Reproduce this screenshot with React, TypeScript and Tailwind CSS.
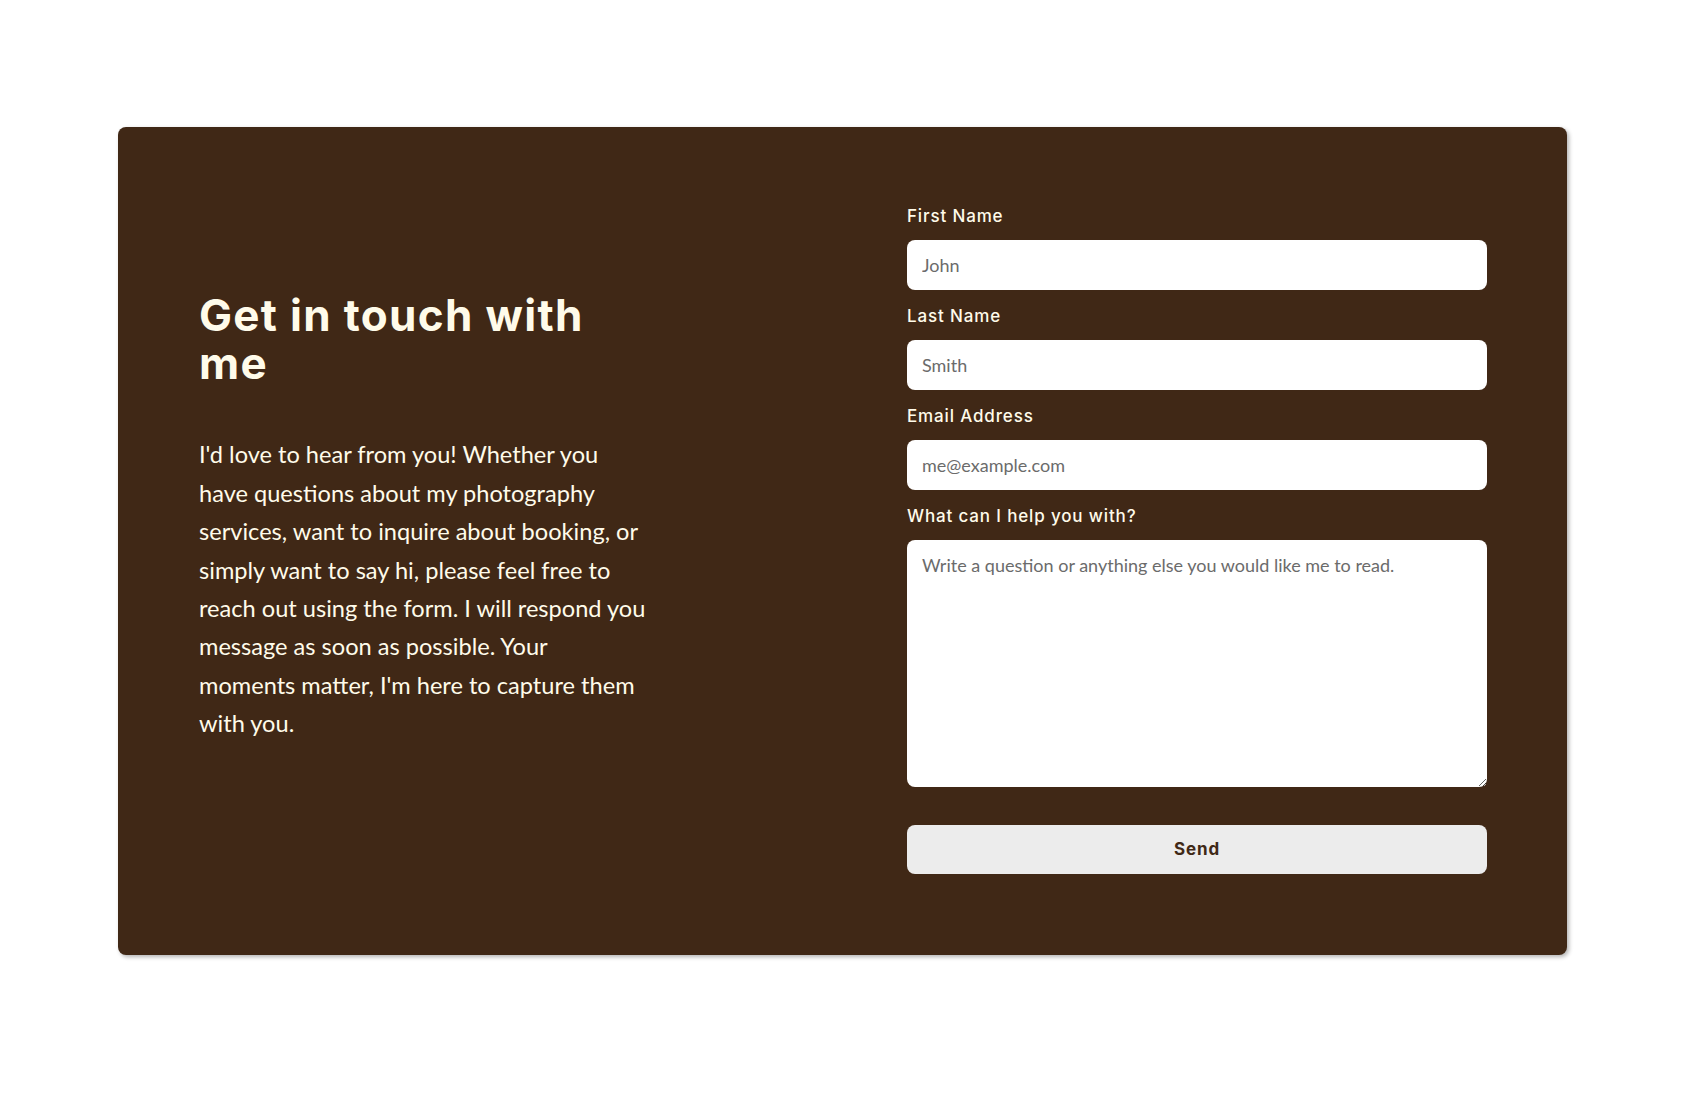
import React from 'react';

function Field({ label, placeholder, first }: { label: string; placeholder: string; first?: boolean }) {
  return (
    <div className={first ? '' : 'mt-[14px]'}>
      <label className="block mb-3 font-['Inter','Noto_Sans',sans-serif] text-[17px] leading-6 font-medium tracking-[0.05em] text-[#fffbea]">
        {label}
      </label>
      <input
        type="text"
        placeholder={placeholder}
        className="w-full h-[50px] rounded-lg bg-white px-[15px] font-['Lato','Open_Sans',sans-serif] text-[18px] text-gray-800 placeholder:text-[#6b6b6b] outline-none"
      />
    </div>
  );
}

export default function App() {
  return (
    <div className="min-h-screen bg-white pt-[127px] pl-[118px]">
      <div className="w-[1449px] h-[828px] bg-[#402816] rounded-lg shadow-[2px_2px_4px_rgba(0,0,0,0.3)] px-[81px] flex items-center justify-between">
        {/* Intro */}
        <div className="w-[447px] -mt-[48px]">
          <h1 className="font-['Inter','Noto_Sans',sans-serif] text-[44px] leading-[48px] font-bold tracking-[0.03em] text-[#fffbea]">
            Get in touch with me
          </h1>
          <p className="mt-[48px] font-['Lato','Open_Sans',sans-serif] text-[23.6px] leading-[38.4px] text-[#fffbea]">
            I'd love to hear from you! Whether you have questions about my photography services, want to inquire about
            booking, or simply want to say hi, please feel free to reach out using the form. I will respond you message as
            soon as possible. Your moments matter, I'm here to capture them with you.
          </p>
        </div>

        {/* Form */}
        <form className="w-[580px] -mr-px -mt-[4px]" onSubmit={(e) => e.preventDefault()}>
          <Field label="First Name" placeholder="John" first />
          <Field label="Last Name" placeholder="Smith" />
          <Field label="Email Address" placeholder="me@example.com" />
          <div className="mt-[14px]">
            <label className="block mb-3 font-['Inter','Noto_Sans',sans-serif] text-[17px] leading-6 font-medium tracking-[0.05em] text-[#fffbea]">
              What can I help you with?
            </label>
            <textarea
              placeholder="Write a question or anything else you would like me to read."
              className="block w-full h-[247px] rounded-lg bg-white px-[15px] py-[12px] font-['Lato','Open_Sans',sans-serif] text-[18px] text-gray-800 placeholder:text-[#6b6b6b] outline-none"
            />
          </div>
          <button
            type="submit"
            className="mt-[38px] w-full h-[49px] rounded-lg bg-[#ececec] font-['Inter','Noto_Sans',sans-serif] text-[17px] font-bold tracking-[0.05em] text-[#402816]"
          >
            Send
          </button>
        </form>
      </div>
    </div>
  );
}
